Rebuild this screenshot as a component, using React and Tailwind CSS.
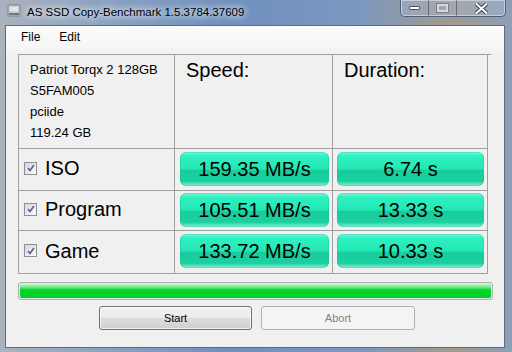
import React from 'react';

const rows = [
  { name: 'ISO', speed: '159.35 MB/s', time: '6.74 s', h: 'h-[42px]' },
  { name: 'Program', speed: '105.51 MB/s', time: '13.33 s', h: 'h-[40px]' },
  { name: 'Game', speed: '133.72 MB/s', time: '10.33 s', h: 'h-[43px]' },
];

const pill =
  'h-[34px] rounded-[6px] flex items-center justify-center text-[20px] text-black ' +
  'bg-[linear-gradient(to_bottom,#7afade_0%,#2ff0c0_12%,#23e8b6_50%,#19cc9c_54%,#1bd0a0_86%,#8fefd6_100%)] ' +
  'shadow-[inset_0_0_0_1px_rgba(20,190,150,0.35)]';

function Check() {
  return (
    <div className="w-[13px] h-[13px] border border-[#8e8f8f] bg-[linear-gradient(135deg,#d6d6d6,#fbfbfb)] flex items-center justify-center shrink-0">
      <svg width="8" height="8" viewBox="0 0 8 8">
        <path d="M1 4 L3 6.5 L7 1" fill="none" stroke="#4b61a0" strokeWidth="1.6" />
      </svg>
    </div>
  );
}

export default function App() {
  return (
    <div className="w-[512px] h-[352px] overflow-hidden flex flex-col font-['Liberation_Sans',Arial,sans-serif] bg-[linear-gradient(to_right,#aab3bd_0%,#8aa3c2_20%,#6f8fbd_45%,#7b98c0_70%,#a39a8e_88%,#8c9fb8_100%)]">
      {/* title bar */}
      <div className="h-[25px] flex items-start shrink-0">
        <svg className="ml-[7px] mt-[4px]" width="14" height="14" viewBox="0 0 14 14">
          <rect x="1" y="1" width="12" height="11" rx="1" fill="#c9ccd0" stroke="#7d8288" />
          <rect x="2" y="9" width="10" height="2" fill="#6f757c" />
          <rect x="3" y="3" width="8" height="4" fill="#e4e6e8" />
        </svg>
        <span className="ml-[6px] mt-[4px] text-[11.5px] leading-[16px] text-black [text-shadow:0_0_6px_#fff,0_0_10px_#fff]">
          AS SSD Copy-Benchmark 1.5.3784.37609
        </span>
        <div className="ml-auto mr-[6px] h-[17px] flex rounded-b-[5px] border border-t-0 border-[#4e617c] shadow-[inset_0_0_0_1px_rgba(255,255,255,0.45)] bg-[rgba(170,190,215,0.35)] overflow-hidden">
          <div className="w-[28px] flex items-center justify-center border-r border-[rgba(60,80,110,0.6)]">
            <div className="w-[11px] h-[4px] bg-white border border-[#4a5568] rounded-[1px]" />
          </div>
          <div className="w-[28px] flex items-center justify-center border-r border-[rgba(60,80,110,0.6)]">
            <div className="w-[11px] h-[8px] border-2 border-[rgba(255,255,255,0.55)] outline outline-1 outline-[rgba(70,90,120,0.5)]" />
          </div>
          <div className="w-[48px] flex items-center justify-center">
            <svg width="13" height="11" viewBox="0 0 13 11">
              <path d="M1.5 1 L11.5 10 M11.5 1 L1.5 10" stroke="#3b4452" strokeWidth="4" strokeLinecap="square" />
              <path d="M1.5 1 L11.5 10 M11.5 1 L1.5 10" stroke="#ffffff" strokeWidth="2" strokeLinecap="square" />
            </svg>
          </div>
        </div>
      </div>

      {/* client area */}
      <div className="ml-[5px] mr-[7px] mb-[4px] flex-1 flex flex-col border border-[#5d6c80] bg-[#f0f0f0]">
        <div className="h-[21px] shrink-0 flex items-center gap-[19px] pl-[15px] text-[12px] text-black bg-[linear-gradient(to_bottom,#fbfbfb,#f6f6f6)]">
          <span>File</span>
          <span>Edit</span>
        </div>

        <div className="pl-[12px] pt-[7px] bg-[linear-gradient(to_bottom,#f6f6f6,#f0f0f0_8px)]">
          <div className="grid grid-cols-[156px_158px_155px] border-t border-l border-[#a0a0a0] w-[473px]">
            <div className="h-[94px] border-r border-b border-[#a0a0a0] pl-[11px] pt-[4px] text-[13px] leading-[21px] text-black">
              <div>Patriot Torqx 2 128GB</div>
              <div>S5FAM005</div>
              <div>pciide</div>
              <div>119.24 GB</div>
            </div>
            <div className="h-[94px] border-r border-b border-[#a0a0a0] pl-[11px] pt-[3px] text-[20px] leading-[24px] text-black">
              Speed:
            </div>
            <div className="h-[94px] border-r border-b border-[#a0a0a0] pl-[11px] pt-[3px] text-[20px] leading-[24px] text-black">
              Duration:
            </div>

            {rows.map((r) => (
              <React.Fragment key={r.name}>
                <div className={`${r.h} border-r border-b border-[#a0a0a0] flex items-center pb-[3px] pl-[5px] gap-[8px]`}>
                  <Check />
                  <span className="text-[20px] leading-[24px] text-black">{r.name}</span>
                </div>
                <div className={`${r.h} border-r border-b border-[#a0a0a0] flex items-center pb-[2px] pl-[5px] pr-[3px]`}>
                  <div className={`${pill} w-full`}>{r.speed}</div>
                </div>
                <div className={`${r.h} border-r border-b border-[#a0a0a0] flex items-center pb-[2px] pl-[4px] pr-[3px]`}>
                  <div className={`${pill} w-full`}>{r.time}</div>
                </div>
              </React.Fragment>
            ))}
          </div>

          <div className="mt-[8px] w-[475px] h-[18px] rounded-[3px] border border-[#b0b0b0] p-[1px] bg-[#e6e6e6]">
            <div className="h-full rounded-[2px] bg-[linear-gradient(to_bottom,#c4f6ca_0%,#5ee574_28%,#00d42a_42%,#00cf28_100%)]" />
          </div>

          <div className="mt-[6px] flex gap-[9px] pl-[81px]">
            <button className="w-[153px] h-[24px] rounded-[3px] border border-[#707070] text-[11px] text-black bg-[linear-gradient(to_bottom,#f2f2f2_0%,#ebebeb_50%,#dddddd_51%,#cfcfcf_100%)] shadow-[inset_0_0_0_1px_rgba(255,255,255,0.7)]">
              Start
            </button>
            <button className="w-[154px] h-[24px] rounded-[3px] border border-[#adb2b5] text-[11px] text-[#838383] bg-[#f4f4f4]">
              Abort
            </button>
          </div>
        </div>
      </div>
    </div>
  );
}
